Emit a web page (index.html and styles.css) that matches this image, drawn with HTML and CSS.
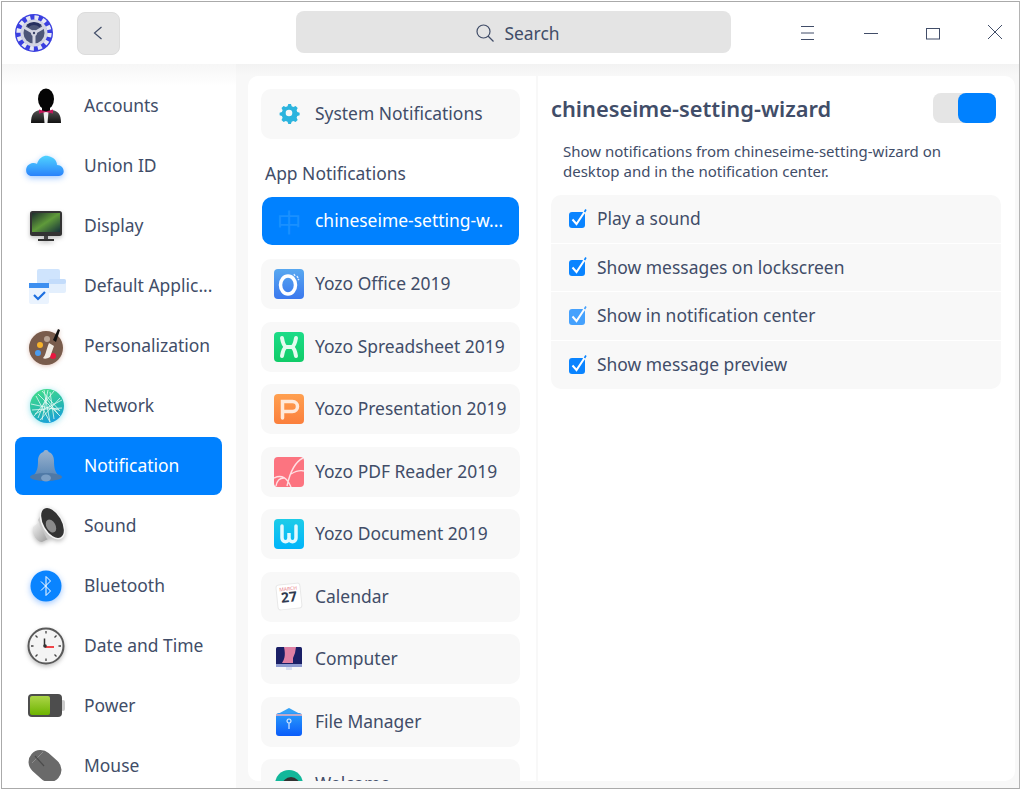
FILE: index.html
```html
<!DOCTYPE html>
<html lang="en">
<head>
<meta charset="UTF-8" />
<title>Control Center</title>
<link rel="stylesheet" href="styles.css">
</head>
<body>
<div class="window">
  <header class="titlebar">
    <svg class="logo" width="40" height="40" viewBox="0 0 40 40">
      <circle cx="20" cy="20" r="19" fill="#3a3fe0"/>
      <circle cx="20" cy="20" r="15.400" fill="none" stroke="#e6e8f4" stroke-width="4.500" stroke-dasharray="4.060 4"/>
      <circle cx="20" cy="20" r="13.500" fill="#d3d5e2"/>
      <circle cx="20" cy="20" r="10.500" fill="#4d5678"/>
      <path d="M20 20V31M20 20 10.500 14.500M20 20 29.500 14.500" stroke="#d3d5e2" stroke-width="3"/>
      <path d="M13.500 13a10 10 0 0 1 13 0" fill="none" stroke="#27305f" stroke-width="3"/>
      <circle cx="20" cy="20" r="3" fill="#d3d5e2"/>
      <circle cx="20" cy="20" r="1.200" fill="#3a4268"/>
    </svg>
    <button class="back-btn">
      <svg width="12" height="16" viewBox="0 0 12 16"><path d="M8.500 2 1.500 8l7 6" fill="none" stroke="#414d68" stroke-width="1.200"/></svg>
    </button>
    <div class="search">
      <svg width="20" height="20" viewBox="0 0 20 20"><circle cx="8.500" cy="8.500" r="6.500" fill="none" stroke="#414d68" stroke-width="1.200"/><path d="m13 13 5.500 5.500" stroke="#414d68" stroke-width="1.200"/></svg>
      <span>Search</span>
    </div>
    <div class="win-btns">
      <svg width="16" height="16" viewBox="0 0 16 16"><path d="M0 1.500h13M0 8h13M0 14.500h13" stroke="#414d68"/></svg>
      <svg width="16" height="16" viewBox="0 0 16 16"><path d="M1 8.500h14" stroke="#414d68"/></svg>
      <svg width="16" height="16" viewBox="0 0 16 16"><rect x="1.500" y="3.500" width="13" height="10.500" fill="none" stroke="#414d68"/></svg>
      <svg width="16" height="16" viewBox="0 0 16 16"><path d="m1 0 14 14M15 0 1 14" stroke="#414d68"/></svg>
    </div>
  </header>

  <div class="body">
    <nav class="sidebar">
      <div class="nav-list">
        <a class="nav-item">
          <svg class="nav-icon" viewBox="0 0 40 40"><defs><linearGradient id="suit" x1="0" y1="0" x2="0" y2="1"><stop offset="0" stop-color="#555"/><stop offset="1" stop-color="#111"/></linearGradient></defs><path d="M5 37c0-9 3-12 9-13l6 3 6-3c6 1 9 4 9 13z" fill="url(#suit)"/><path d="M17.500 26h5l-1 11h-3z" fill="#eee"/><ellipse cx="20" cy="13" rx="8" ry="10.500" fill="#050505"/><path d="M16 21h8v5h-8z" fill="#050505"/><path d="m13 23.500 7 2 7-2v4l-7-1.500-7 1.500z" fill="#c2185b"/></svg>
          <span>Accounts</span>
        </a>
        <a class="nav-item">
          <svg class="nav-icon glow-blue" viewBox="0 0 40 40"><defs><linearGradient id="cloud" x1="0" y1="0" x2="0" y2="1"><stop offset="0" stop-color="#4fd3ff"/><stop offset="1" stop-color="#2a82fb"/></linearGradient></defs><path d="M6 30c-8 0-8-12 1-13 1 0 3 0 4 1 2-7 8-9 11-8 5 1 9 4 9 9 8 0 9 11 2 11z" fill="url(#cloud)"/></svg>
          <span>Union ID</span>
        </a>
        <a class="nav-item">
          <svg class="nav-icon glow-dark" viewBox="0 0 40 40"><defs><linearGradient id="screen" x1="0" y1="0" x2="1" y2="1"><stop offset="0" stop-color="#1d2f2c"/><stop offset=".5" stop-color="#5f9a3a"/><stop offset="1" stop-color="#16303a"/></linearGradient></defs><rect x="4" y="5" width="32" height="25" rx="2.500" fill="#333"/><rect x="6" y="7" width="28" height="19" fill="url(#screen)"/><path d="M18 30h4v3h-4z" fill="#444"/><path d="M12 33h16v2H12z" fill="#333"/></svg>
          <span>Display</span>
        </a>
        <a class="nav-item">
          <svg class="nav-icon" viewBox="0 0 40 40"><rect x="11" y="3" width="23" height="16" rx="2" fill="#cfe4fd"/><rect x="22" y="13" width="18" height="14" rx="2" fill="#e3effd"/><rect x="22" y="13" width="18" height="5" rx="2" fill="#c3dcfb"/><rect x="3" y="17" width="20" height="21" rx="2" fill="#eaf3fe"/><rect x="3" y="17" width="20" height="5" fill="#3d8ff0"/><path d="m8 29 4 4 7-7" fill="none" stroke="#1d6fe0" stroke-width="2.200"/></svg>
          <span>Default Applic...</span>
        </a>
        <a class="nav-item">
          <svg class="nav-icon glow-red" viewBox="0 0 40 40"><circle cx="20" cy="22" r="17" fill="#795c4c"/><circle cx="14" cy="19" r="3" fill="#f7b32b"/><circle cx="12" cy="27" r="3" fill="#4a9cf0"/><circle cx="27" cy="30" r="3" fill="#e8173f"/><circle cx="21" cy="13" r="3" fill="#b9a596"/><path d="m27 14 5-11 2 1-4 12z" fill="#111"/><path d="M23 17l5 3-4 11c-3 2-6 2-7 1 3-3 3-8 6-15z" fill="#f1ebe3"/></svg>
          <span>Personalization</span>
        </a>
        <a class="nav-item">
          <svg class="nav-icon glow-teal" viewBox="0 0 40 40"><defs><linearGradient id="net" x1="0.300" y1="0" x2="0.700" y2="1"><stop offset="0" stop-color="#42dc8c"/><stop offset=".6" stop-color="#25b8b0"/><stop offset="1" stop-color="#1a9fe0"/></linearGradient><clipPath id="netclip"><circle cx="21" cy="20" r="17"/></clipPath></defs><circle cx="21" cy="20" r="17" fill="url(#net)"/><path d="M8 30 28 5M12 8l22 22M5 18l28 6M18 4l6 32M9 28l27-14M14 34 34 12M24 36 10 10M6 24l30-2M16 5l18 20M12 32l8-20 12 16M22 4l-6 30M28 33 24 6" stroke="#e6faf3" stroke-width=".8" fill="none" clip-path="url(#netclip)"/></svg>
          <span>Network</span>
        </a>
        <a class="nav-item selected">
          <svg class="nav-icon" viewBox="0 0 40 40"><defs><linearGradient id="bell" x1="0" y1="0" x2="0" y2="1"><stop offset="0" stop-color="#9ab3cf"/><stop offset="1" stop-color="#5d88b5"/></linearGradient></defs><path d="M20 4c2 0 2.500 1 2.500 2 4 1 5.500 5 5.500 9 0 7 1 11 5 15H7c4-4 5-8 5-15 0-4 1.500-8 5.500-9 0-1 .5-2 2.500-2z" fill="url(#bell)"/><ellipse cx="20" cy="31" rx="16" ry="4" fill="#4f79a6"/><ellipse cx="20" cy="32" rx="5" ry="3.500" fill="#7b9ec4"/></svg>
          <span>Notification</span>
        </a>
        <a class="nav-item">
          <svg class="nav-icon glow-dark" viewBox="0 0 40 40"><defs><linearGradient id="spk" x1="0" y1="0" x2="1" y2="1"><stop offset="0" stop-color="#f2f2f2"/><stop offset="1" stop-color="#999"/></linearGradient></defs><path d="M7 21 12 17 22 33 16 36C11 36 6 29 7 21z" fill="url(#spk)"/><path d="M12 14 19 1 36 29 21 33z" fill="#c8c8c8"/><ellipse cx="26.500" cy="17" rx="10.500" ry="18" transform="rotate(-30 26.500 17)" fill="#f4f4f4"/><ellipse cx="26.500" cy="17" rx="9" ry="16.500" transform="rotate(-30 26.500 17)" fill="#333"/><ellipse cx="25" cy="20" rx="4.500" ry="7" transform="rotate(-30 25 20)" fill="#8a8a8a"/></svg>
          <span>Sound</span>
        </a>
        <a class="nav-item">
          <svg class="nav-icon glow-blue" viewBox="0 0 40 40"><circle cx="20" cy="20" r="15.500" fill="#0a84ff"/><path d="m15 15.500 9.500 9.500-4.500 4.500v-19l4.500 4.500-9.500 9.500" fill="none" stroke="#fff" stroke-width="1"/></svg>
          <span>Bluetooth</span>
        </a>
        <a class="nav-item">
          <svg class="nav-icon glow-dark" viewBox="0 0 40 40"><circle cx="20" cy="20" r="17.500" fill="#f4f4f4" stroke="#5a5a5a" stroke-width="2"/><g stroke="#444" stroke-width="1.300"><path d="M20 5v2.500M20 32.500V35M5 20h2.500M32.500 20H35M9.500 9.500l2 2M28.500 28.500l2 2M30.500 9.500l-2 2M11.500 28.500l-2 2"/></g><path d="M18.500 12.500V20" stroke="#333" stroke-width="1.500"/><path d="M19 21h9" stroke="#f0464a" stroke-width="2"/><circle cx="19" cy="20" r="1.800" fill="#333"/></svg>
          <span>Date and Time</span>
        </a>
        <a class="nav-item">
          <svg class="nav-icon" viewBox="0 0 40 40"><defs><linearGradient id="batt" x1="0" y1="0" x2="0" y2="1"><stop offset="0" stop-color="#acd548"/><stop offset="1" stop-color="#6db400"/></linearGradient></defs><rect x="35" y="14" width="4" height="11" rx="2" fill="#ccc"/><rect x="2" y="8" width="34" height="23" rx="4" fill="#4d4d4d"/><rect x="4" y="10" width="20" height="19" rx="2" fill="url(#batt)"/></svg>
          <span>Power</span>
        </a>
        <a class="nav-item">
          <svg class="nav-icon" viewBox="0 0 40 40"><rect x="-18" y="-12" width="36" height="24" rx="12" transform="translate(19 20) rotate(42)" fill="#6a6a6a"/><path d="M6 17 17 6" stroke="#8c8c8c" stroke-width="1"/><path d="m9 10 9 10" stroke="#4b4b4b" stroke-width="1.200"/></svg>
          <span>Mouse</span>
        </a>
      </div>
    </nav>

    <main class="content">
      <div class="panel">
        <section class="app-list">
          <a class="app-item">
            <svg class="app-icon" viewBox="0 0 30 30"><path d="M15 6l2 0 .7 2.300 1.700.7 2.200-1.100 2.100 2.100-1.100 2.200.7 1.700 2.300.8v2.600l-2.300.8-.7 1.700 1.100 2.200-2.100 2.100-2.200-1.100-1.700.7-.8 2.300h-2.600l-.8-2.300-1.700-.7-2.200 1.100-2.100-2.100 1.100-2.200-.7-1.700-2.300-.8v-2.600l2.300-.8.7-1.700-1.100-2.200 2.100-2.100 2.200 1.100 1.700-.7.8-2.300z" fill="#2cb4de" transform="translate(0 -1)"/><circle cx="15" cy="14" r="3.300" fill="#f8f8f8"/></svg>
            <span>System Notifications</span>
          </a>
          <h2 class="list-title">App Notifications</h2>
          <a class="app-item selected">
            <span class="zh-glyph">中</span>
            <span>chineseime-setting-w...</span>
          </a>
          <a class="app-item">
            <svg class="app-icon" viewBox="0 0 30 30"><defs><linearGradient id="yo" x1="0" y1="0" x2="0" y2="1"><stop offset="0" stop-color="#58a8f0"/><stop offset="1" stop-color="#3b78ee"/></linearGradient></defs><rect width="30" height="30" rx="4" fill="url(#yo)"/><ellipse cx="14" cy="16" rx="7.500" ry="9" fill="none" stroke="#fff" stroke-width="3.500"/><path d="M20 5l1 2M23 7l1 2M25 10l-1 1" stroke="#dcecff" stroke-width="1.500"/></svg>
            <span>Yozo Office 2019</span>
          </a>
          <a class="app-item">
            <svg class="app-icon" viewBox="0 0 30 30"><defs><linearGradient id="ys" x1="0" y1="0" x2="0" y2="1"><stop offset="0" stop-color="#1cdc88"/><stop offset="1" stop-color="#10cc68"/></linearGradient></defs><rect width="30" height="30" rx="4" fill="url(#ys)"/><path d="M8 6c1 6 2 8 4 9-2 1-3 3-4 9M22 6c-1 6-2 8-4 9 2 1 3 3 4 9M12 15h6" fill="none" stroke="#e4fbef" stroke-width="4" stroke-linecap="round"/></svg>
            <span>Yozo Spreadsheet 2019</span>
          </a>
          <a class="app-item">
            <svg class="app-icon" viewBox="0 0 30 30"><defs><linearGradient id="yp" x1="0" y1="0" x2="0" y2="1"><stop offset="0" stop-color="#ffa050"/><stop offset="1" stop-color="#fb7f3c"/></linearGradient></defs><rect width="30" height="30" rx="4" fill="url(#yp)"/><path d="M8.500 24V7.500h10a4.500 4.500 0 0 1 0 10h-10" fill="none" stroke="#ffe9da" stroke-width="3.500" stroke-linecap="round"/></svg>
            <span>Yozo Presentation 2019</span>
          </a>
          <a class="app-item">
            <svg class="app-icon" viewBox="0 0 30 30"><rect width="30" height="30" rx="4" fill="#fc7480"/><path d="M29 1c-8 4-13 14-16 28M0 21c8-4 13 0 17 9M2 29c1-6 4-8 8-8M17 17c5-3 9-4 13-3" fill="none" stroke="#ffe0e3" stroke-width="1.400"/></svg>
            <span>Yozo PDF Reader 2019</span>
          </a>
          <a class="app-item">
            <svg class="app-icon" viewBox="0 0 30 30"><defs><linearGradient id="yd" x1="0" y1="0" x2="0" y2="1"><stop offset="0" stop-color="#1dcce8"/><stop offset="1" stop-color="#00b4fa"/></linearGradient></defs><rect width="30" height="30" rx="4" fill="url(#yd)"/><path d="M8 7v12c0 5 7 5 7 0v-5 5c0 5 7 5 7 0V7" fill="none" stroke="#e2f9ff" stroke-width="3.500" stroke-linecap="round"/></svg>
            <span>Yozo Document 2019</span>
          </a>
          <a class="app-item">
            <svg class="app-icon" viewBox="0 0 30 30"><g transform="rotate(-6 15 15)"><rect x="3" y="2" width="24" height="25" rx="3" fill="#fff" stroke="#e8e8e8"/><text x="15" y="8.500" class="cal-month">MARCH</text><text x="15" y="20" class="cal-day">27</text></g></svg>
            <span>Calendar</span>
          </a>
          <a class="app-item">
            <svg class="app-icon" viewBox="0 0 30 30"><rect x="2" y="3" width="26" height="20" rx="1.500" fill="#1a1f66"/><path d="M10 3h12l-1 6-2 5v5H8c2-3 4-7 2-16z" fill="#de7fa3"/><rect x="2" y="20" width="26" height="3" fill="#8e9bd0"/><path d="M12 23h6v3h-6z" fill="#d9def0"/></svg>
            <span>Computer</span>
          </a>
          <a class="app-item">
            <svg class="app-icon" viewBox="0 0 30 30"><defs><linearGradient id="fm" x1="0" y1="0" x2="0" y2="1"><stop offset="0" stop-color="#2a9cfb"/><stop offset="1" stop-color="#0a5cfa"/></linearGradient></defs><path d="M2 8 15 1l13 7z" fill="#35a2f8"/><rect x="2" y="6" width="26" height="23" rx="3" fill="url(#fm)"/><path d="M2 8h26" stroke="#f3b1b8" stroke-width="1.500"/><path d="M15 12a2 2 0 1 0 .01 0M15 16v6" fill="none" stroke="#d5e8ff" stroke-width="1.200"/></svg>
            <span>File Manager</span>
          </a>
          <a class="app-item">
            <svg class="app-icon" viewBox="0 0 30 30"><circle cx="15" cy="15" r="14" fill="#12b79a"/><circle cx="17" cy="17" r="9" fill="#333"/></svg>
            <span>Welcome</span>
          </a>
        </section>

        <section class="detail">
          <div class="detail-head">
            <h1>chineseime-setting-wizard</h1>
            <div class="toggle"><div class="knob"></div></div>
          </div>
          <p class="desc">Show notifications from chineseime-setting-wizard on desktop and in the notification center.</p>
          <div class="options">
            <label class="option"><svg class="check" viewBox="0 0 20 20"><rect x="1" y="3" width="16" height="16" rx="3" fill="#0a84ff"/><path d="m4.500 10.500 4 4.500 8-12" fill="none" stroke="#fff" stroke-width="2"/><path d="m16.500 3 1.500-2.500" stroke="#0a84ff" stroke-width="1.600"/></svg><span>Play a sound</span></label>
            <label class="option"><svg class="check" viewBox="0 0 20 20"><rect x="1" y="3" width="16" height="16" rx="3" fill="#0a84ff"/><path d="m4.500 10.500 4 4.500 8-12" fill="none" stroke="#fff" stroke-width="2"/><path d="m16.500 3 1.500-2.500" stroke="#0a84ff" stroke-width="1.600"/></svg><span>Show messages on lockscreen</span></label>
            <label class="option"><svg class="check light" viewBox="0 0 20 20"><rect x="1" y="3" width="16" height="16" rx="3" fill="#0a84ff"/><path d="m4.500 10.500 4 4.500 8-12" fill="none" stroke="#fff" stroke-width="2"/><path d="m16.500 3 1.500-2.500" stroke="#0a84ff" stroke-width="1.600"/></svg><span>Show in notification center</span></label>
            <label class="option"><svg class="check" viewBox="0 0 20 20"><rect x="1" y="3" width="16" height="16" rx="3" fill="#0a84ff"/><path d="m4.500 10.500 4 4.500 8-12" fill="none" stroke="#fff" stroke-width="2"/><path d="m16.500 3 1.500-2.500" stroke="#0a84ff" stroke-width="1.600"/></svg><span>Show message preview</span></label>
          </div>
        </section>
      </div>
    </main>
  </div>
</div>
</body>
</html>
```

FILE: styles.css
```css
* {
  box-sizing: border-box;
}
html, body {
  height: 100%;
}
body {
  margin: 0;
  padding: 1px;
  background: #fff;
  font-family: "Noto Sans", sans-serif;
  color: #414d68;
  overflow: hidden;
}
.window {
  width: 1019px;
  height: 788px;
  border: 1px solid #aaa;
  border-right-color: #b4b4b4;
  display: flex;
  flex-direction: column;
  background: #fff;
  overflow: hidden;
}
.titlebar {
  height: 62px;
  flex: none;
  display: flex;
  align-items: center;
  padding: 0 15px 0 12px;
  background: #fff;
}
.logo {
  flex: none;
}
.back-btn {
  width: 43px;
  height: 43px;
  margin-left: 23px;
  padding: 0;
  flex: none;
  display: flex;
  align-items: center;
  justify-content: center;
  background: #e5e5e5;
  border: 1px solid #dcdcdc;
  border-radius: 8px;
}
.search {
  width: 435px;
  height: 42px;
  margin-left: 176px;
  margin-top: -2px;
  padding: 1px 0 0 8px;
  flex: none;
  display: flex;
  align-items: center;
  justify-content: center;
  gap: 9px;
  background: #e4e4e4;
  border-radius: 8px;
  font-size: 17.45px;
}
.win-btns {
  margin-left: 70px;
  display: flex;
  gap: 46px;
}
.body {
  flex: 1;
  min-height: 0;
  display: flex;
  background: #f8f8f8;
}
.sidebar {
  width: 234px;
  flex: none;
  padding: 0 14px 0 13px;
  background: linear-gradient(#f6f6f6, #fff 22px);
}
.nav-list {
  height: 717px;
  padding-top: 13px;
  display: flex;
  flex-direction: column;
  gap: 2px;
  overflow: hidden;
}
.nav-item {
  height: 58px;
  flex: none;
  display: flex;
  align-items: center;
  padding-left: 11px;
  gap: 18px;
  border-radius: 8px;
  font-size: 17.45px;
  white-space: nowrap;
}
.nav-item span {
  margin-top: -2px;
}
.nav-item.selected {
  background: #0081ff;
  color: #fff;
}
.nav-icon {
  width: 40px;
  height: 40px;
  flex: none;
}
.glow-blue {
  filter: drop-shadow(0 2px 3px rgb(40 130 255 / 0.45));
}
.glow-teal {
  filter: drop-shadow(0 1px 3px rgb(40 200 220 / 0.5));
}
.glow-red {
  filter: drop-shadow(0 1px 2px rgb(170 90 60 / 0.35));
}
.glow-dark {
  filter: drop-shadow(0 2px 2px rgb(0 0 0 / 0.25));
}
.content {
  flex: 1;
  min-width: 0;
  padding: 12px 4px 7px 12px;
  background: linear-gradient(#f2f2f2, #f8f8f8 12px);
}
.panel {
  height: 100%;
  display: flex;
  background: #fff;
  border-radius: 10px;
  overflow: hidden;
}
.app-list {
  width: 290px;
  flex: none;
  padding: 13px 16px 0 13px;
  border-right: 2px solid #f8f8f8;
  overflow: hidden;
}
.app-item {
  height: 50px;
  margin-bottom: 12.5px;
  display: flex;
  align-items: center;
  gap: 11px;
  padding-left: 13px;
  background: #f8f8f8;
  border-radius: 10px;
  font-size: 17.45px;
  white-space: nowrap;
}
.app-item > span {
  margin-top: -2px;
}
.app-item.selected {
  height: 48px;
  margin: 0 1px 14px;
  padding-left: 12px;
  background: #0081ff;
  color: #fff;
}
.app-item > .zh-glyph {
  margin-top: 0;
}
.app-icon {
  width: 30px;
  height: 30px;
  flex: none;
}
.zh-glyph {
  width: 30px;
  flex: none;
  font-family: "Noto Sans CJK SC", sans-serif;
  font-size: 25px;
  line-height: 30px;
  text-align: center;
  color: #1a90ff;
}
.list-title {
  margin: 0 0 12.5px 4px;
  padding-top: 10px;
  font-size: 17.45px;
  line-height: 23px;
  font-weight: 400;
}
.cal-month {
  font-family: "Noto Sans", sans-serif;
  font-size: 5px;
  fill: #e8808a;
  text-anchor: middle;
}
.cal-day {
  font-family: "Noto Sans", sans-serif;
  font-size: 14px;
  font-weight: 700;
  fill: #303a50;
  text-anchor: middle;
}
.detail {
  flex: 1;
  min-width: 0;
  padding: 17px 14px 0 13px;
}
.detail-head {
  display: flex;
  align-items: center;
  justify-content: space-between;
  padding-right: 5px;
  height: 30px;
}
.detail-head h1 {
  margin: 0;
  font-size: 21.8px;
  font-weight: 600;
}
.toggle {
  width: 63px;
  height: 30px;
  display: flex;
  justify-content: flex-end;
  background: #e5e5e5;
  border-radius: 8px;
}
.knob {
  width: 38px;
  height: 30px;
  background: #0081ff;
  border-radius: 8px;
}
.desc {
  margin: 18px 30px 0 12px;
  font-size: 15px;
  line-height: 20px;
}
.options {
  margin-top: 14px;
  background: #f8f8f8;
  border-radius: 10px;
  overflow: hidden;
}
.option {
  height: 48.500px;
  display: flex;
  align-items: center;
  gap: 9px;
  padding-left: 17px;
  font-size: 17.45px;
  border-bottom: 1px solid #fff;
}
.option span {
  margin-top: -1px;
}
.option:last-child {
  border-bottom: none;
}
.check {
  width: 20px;
  height: 20px;
  flex: none;
}
.check.light {
  opacity: .75;
}
```
